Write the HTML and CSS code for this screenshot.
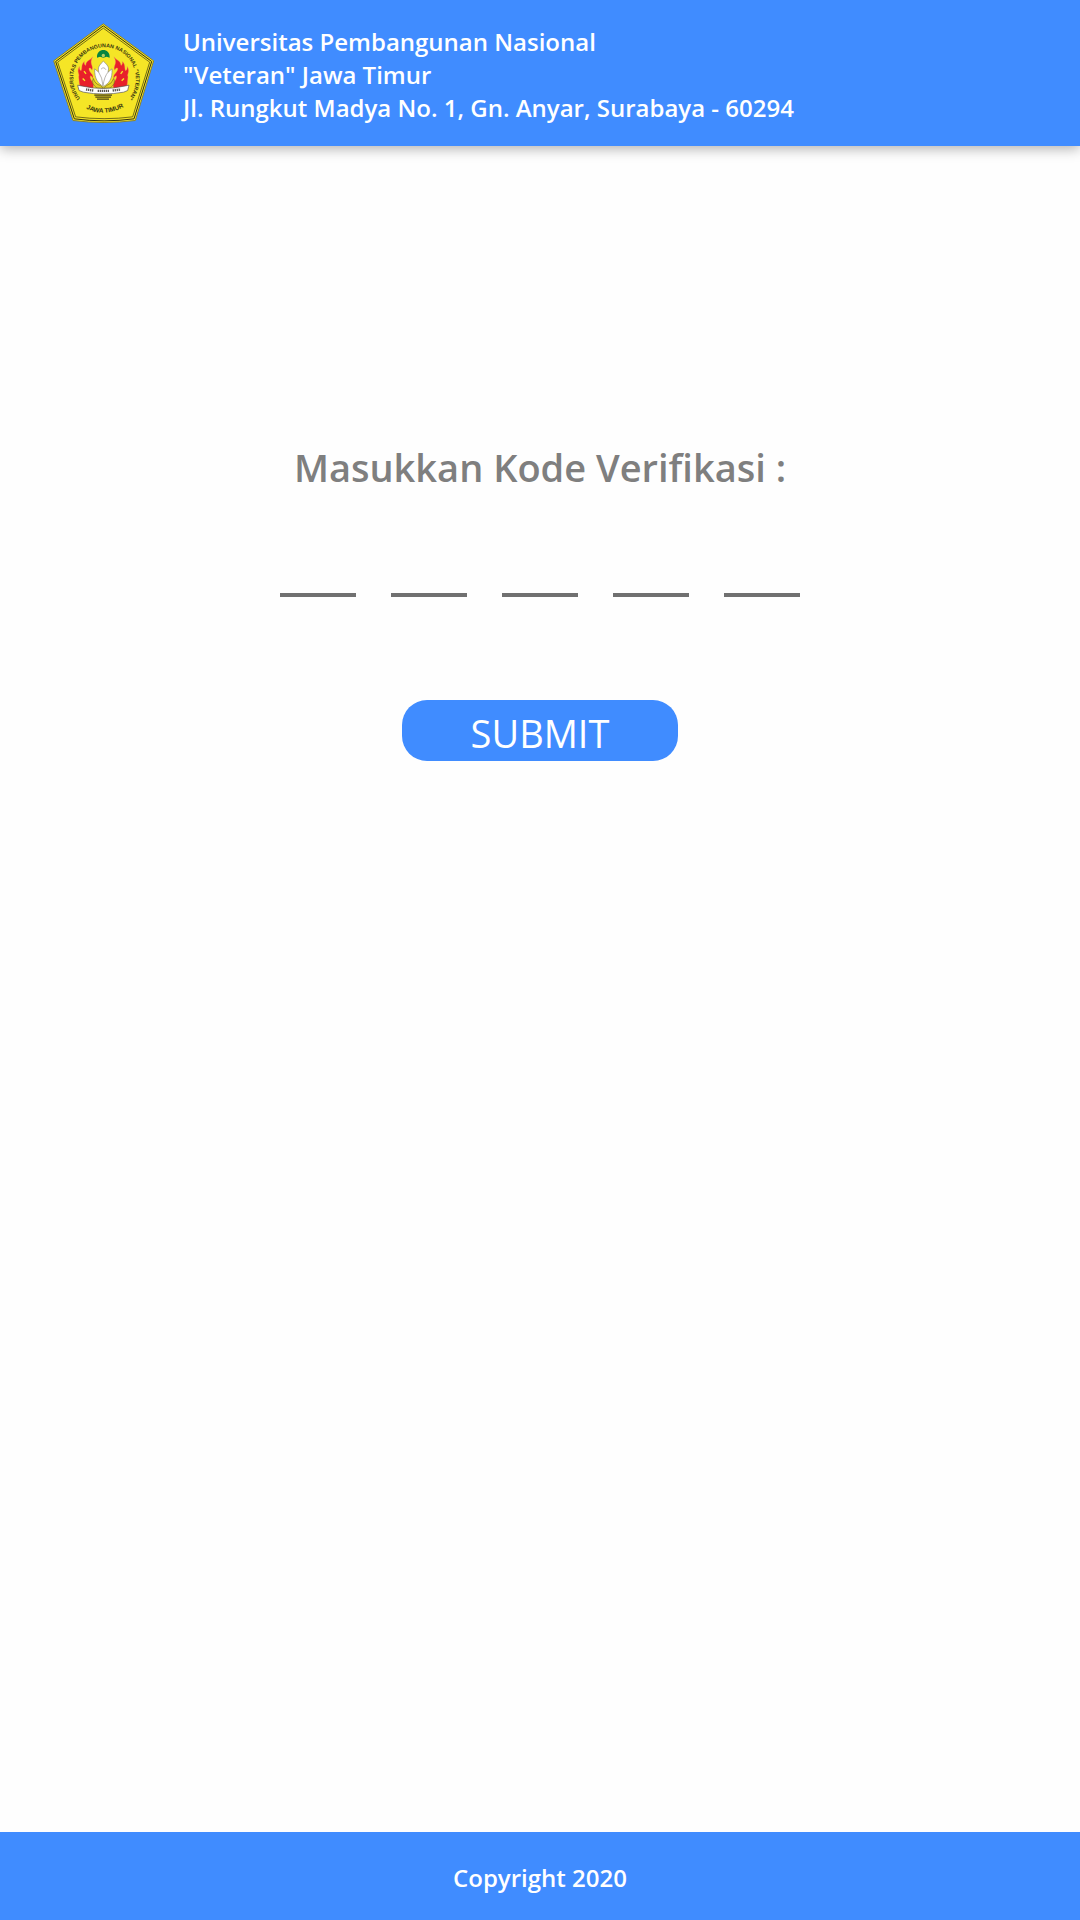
FILE: index.html
```html
<!DOCTYPE html>
<html lang="id">
<head>
<meta charset="utf-8">
<meta name="viewport" content="width=device-width, initial-scale=1">
<title>Kode Verifikasi</title>
<link rel="stylesheet" href="styles.css">
</head>
<body>
<header class="site-header">
  <svg class="logo" viewBox="39 39 306 303" role="img" aria-label="UPN Veteran Jawa Timur">
    <defs>
      <path id="arc-top" d="M120 266A94 94 0 1 1 267 266"/>
      <path id="arc-bottom" d="M129 292Q192 330 260 287"/>
    </defs>
    <path d="M190 43L341 154L286 333Q192 345 99 333L41 154Z" fill="#f5e526" stroke="#8c8428" stroke-width="3" stroke-linejoin="round"/>
    <path d="M190 49L335 156L282 328Q192 340 103 328L47 156Z" fill="none" stroke="#35320f" stroke-width="3"/>
    <path d="M190 56L329 158L278 322Q192 333 107 322L53 158Z" fill="none" stroke="#35320f" stroke-width="2"/>
    <text class="logo-text"><textPath href="#arc-top" startOffset="50%" text-anchor="middle">UNIVERSITAS PEMBANGUNAN NASIONAL "VETERAN"</textPath></text>
    <text class="logo-text logo-city"><textPath href="#arc-bottom" startOffset="50%" text-anchor="middle">JAWA TIMUR</textPath></text>
    <path d="M171 145C169 114 211 114 209 145L200 142L190 145L180 142Z" fill="#078440"/>
    <circle cx="190" cy="138" r="5" fill="#b9cf65"/>
    <g fill="#e8202a" stroke="#f58a62" stroke-width="1">
      <path d="M158 142C151 154 139 151 137 168C133 166 132 161 133 156C122 166 128 176 123 184C117 180 119 174 118 171C109 188 120 193 116 202L119 230L158 238C168 219 147 213 151 199C157 200 158 207 158 207C164 195 145 188 147 176C153 174 155 181 156 182C162 169 146 163 158 142Z"/>
      <path d="M222 142C229 154 241 151 243 168C247 166 248 161 247 156C258 166 252 176 257 184C263 180 261 174 262 171C271 188 260 193 264 202L261 230L222 238C212 219 233 213 229 199C223 200 222 207 222 207C216 195 235 188 233 176C227 174 225 181 224 182C218 169 234 163 222 142Z"/>
    </g>
    <path d="M132 185L138 193M128 207L135 214M248 185L242 193M252 207L245 214" stroke="#f5e526" stroke-width="4"/>
    <path d="M160 207Q165 224 181 228L190 236L200 228Q216 223 221 207Q229 222 210 236H171Q152 222 160 207Z" fill="#e5cf24" stroke="#736b22" stroke-width="2"/>
    <path d="M190 155C170 173 176 180 176 188L164 178C163 208 174 222 190 231C207 222 218 208 216 178L204 188C205 179 211 173 190 155Z" fill="#fff" stroke="#87847c" stroke-width="2"/>
    <path d="M176 188Q187 203 189 229Q193 201 204 188M183 179Q192 170 198 181" fill="none" stroke="#96938b" stroke-width="2"/>
    <path d="M113 227L128 230Q190 244 252 230L267 227L263 243L251 248Q190 259 130 248L117 243Z" fill="#fff" stroke="#55514b" stroke-width="2"/>
    <path d="M138 240L160 243M173 244H207M218 243L242 240" stroke="#5c5850" stroke-width="7" stroke-dasharray="4 2"/>
    <path d="M163 257H216M166 263H213M171 269H207" stroke="#4e4517" stroke-width="4"/>
  </svg>
  <p class="address">Universitas Pembangunan Nasional<br>"Veteran" Jawa Timur<br>Jl. Rungkut Madya No. 1, Gn. Anyar, Surabaya - 60294</p>
</header>
<main class="content">
  <form class="verify">
    <h1 class="title" id="code-title">Masukkan Kode Verifikasi :</h1>
    <div class="code" role="group" aria-labelledby="code-title">
      <input class="digit" type="text" inputmode="numeric" maxlength="1" aria-label="Digit 1">
      <input class="digit" type="text" inputmode="numeric" maxlength="1" aria-label="Digit 2">
      <input class="digit" type="text" inputmode="numeric" maxlength="1" aria-label="Digit 3">
      <input class="digit" type="text" inputmode="numeric" maxlength="1" aria-label="Digit 4">
      <input class="digit" type="text" inputmode="numeric" maxlength="1" aria-label="Digit 5">
    </div>
    <button class="submit" type="submit">SUBMIT</button>
  </form>
</main>
<footer class="site-footer">Copyright 2020</footer>
</body>
</html>
```
FILE: styles.css
```css
* {
  box-sizing: border-box;
}

body {
  margin: 0;
  min-height: 100vh;
  display: flex;
  flex-direction: column;
  background: #fefefe;
  font-family: "Segoe UI", "Open Sans", "Noto Sans", sans-serif;
}

.site-header {
  display: flex;
  align-items: center;
  gap: 28px;
  padding: 22px 53px;
  background: #408cff;
  color: #fff;
  box-shadow: 0 3px 12px rgba(0, 0, 0, 0.3);
}

.logo {
  flex: none;
  width: 102px;
  height: 102px;
}

.logo-text {
  font: bold 16px "Liberation Sans Narrow", "Liberation Sans", sans-serif;
  fill: #37340f;
}

.logo-city {
  font-size: 19px;
}

.address {
  margin: 0;
  padding-top: 3px;
  font-size: 24px;
  font-weight: 600;
  line-height: 33px;
}

.content {
  flex: 1;
  padding: 293px 24px 48px;
}

.verify {
  display: flex;
  flex-direction: column;
  align-items: center;
}

.title {
  margin: 0;
  color: #7f7f7f;
  font-size: 38px;
  font-weight: 600;
  line-height: 56px;
  text-align: center;
}

.code {
  display: flex;
  gap: 35px;
  margin-top: 38px;
}

.digit {
  width: 76px;
  height: 64px;
  padding: 0;
  border: 0;
  border-bottom: 4px solid #707070;
  background: transparent;
  color: #7f7f7f;
  font: inherit;
  font-size: 38px;
  text-align: center;
  outline: none;
}

.submit {
  width: 276px;
  height: 61px;
  margin-top: 103px;
  padding: 4px 0 0;
  border: 0;
  border-radius: 25px;
  background: #408cff;
  color: #fff;
  font: inherit;
  font-size: 38px;
  line-height: 56px;
}

.site-footer {
  padding: 29px 24px 26px;
  background: #408cff;
  color: #fff;
  font-size: 24px;
  font-weight: 600;
  line-height: 33px;
  text-align: center;
}
```
